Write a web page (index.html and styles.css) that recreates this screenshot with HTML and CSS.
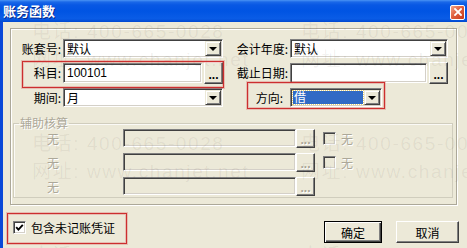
FILE: index.html
```html
<!DOCTYPE html>
<html lang="zh-CN">
<head>
<meta charset="utf-8">
<title>账务函数</title>
<link rel="stylesheet" href="styles.css">
</head>
<body>
<div class="win">
  <div class="titlebar">
    <span class="title">账务函数</span>
    <span class="close"><svg width="8" height="8" viewBox="0 0 8 8"><path d="M1 1L7 7M7 1L1 7" stroke="#fff" stroke-width="1.8" stroke-linecap="square"/></svg></span>
  </div>
  <div class="client">
    <div class="panel">
      <div class="form">
        <span class="lbl">账套号:</span>
        <div class="combo"><span class="val">默认</span><span class="drop"><i class="tri"></i></span></div>
        <span class="lbl">会计年度:</span>
        <div class="combo"><span class="val">默认</span><span class="drop"><i class="tri"></i></span></div>

        <span class="lbl">科目:</span>
        <div class="pick"><div class="edit">100101</div><span class="dots">...</span></div>
        <span class="lbl">截止日期:</span>
        <div class="pick"><div class="edit"></div><span class="dots">...</span></div>

        <span class="lbl">期间:</span>
        <div class="combo"><span class="val">月</span><span class="drop"><i class="tri"></i></span></div>
        <span class="lbl lbl-dir">方向:</span>
        <div class="combo combo-dir"><span class="val sel">借</span><span class="drop"><i class="tri"></i></span></div>
      </div>
      <fieldset class="group">
        <legend>辅助核算</legend>
        <div class="arow">
          <span class="albl">无</span><span class="aedit"></span><span class="dots dis">...</span>
          <span class="acb"></span><span class="atxt">无</span>
        </div>
        <div class="arow">
          <span class="albl">无</span><span class="aedit"></span><span class="dots dis">...</span>
          <span class="acb"></span><span class="atxt">无</span>
        </div>
        <div class="arow">
          <span class="albl">无</span><span class="aedit"></span><span class="dots dis">...</span>
        </div>
      </fieldset>
    </div>
    <div class="footer">
      <div class="chk">
        <span class="box"><svg width="9" height="9" viewBox="0 0 9 9"><path d="M1.2 4.2L3.4 6.6L7.8 1.8" fill="none" stroke="#000" stroke-width="1.9"/></svg></span>
        <span>包含未记账凭证</span>
      </div>
      <div class="btns">
        <span class="btn def">确定</span>
        <span class="btn">取消</span>
      </div>
    </div>
    <div class="watermark">
      <div class="wm-tile"><span>电话: 400-665-0028</span><span>网址: www.chanjet.net</span></div>
      <div class="wm-tile"><span>电话: 400-665-0028</span><span>网址: www.chanjet.net</span></div>
      <div class="wm-tile"><span>电话: 400-665-0028</span><span>网址: www.chanjet.net</span></div>
      <div class="wm-tile"><span>电话: 400-665-0028</span><span>网址: www.chanjet.net</span></div>
      <div class="wm-tile"><span>电话: 400-665-0028</span></div>
      <div class="wm-tile"><span>电话: 400-665-0028</span></div>
    </div>
  </div>
  <div class="mark mark-subject"></div>
  <div class="mark mark-dir"></div>
  <div class="mark mark-chk"></div>
</div>
</body>
</html>
```

FILE: styles.css
```css
* { box-sizing: border-box; }
html, body { margin: 0; padding: 0; }
body {
  width: 467px; height: 248px; overflow: hidden;
  background: #ece9d8;
  font-family: "Noto Sans CJK SC", "Liberation Sans", sans-serif;
  font-size: 12px; color: #000;
}
.win { position: relative; width: 467px; height: 248px; display: flex; flex-direction: column; }

.titlebar {
  height: 22px; flex: none;
  display: flex; align-items: center; justify-content: space-between;
  padding: 0 2px 0 3px;
  background: linear-gradient(#4a94f5 0, #1a68e8 2px, #0858e4 5px, #0054e3 50%, #0a5ce6 85%, #0048d0 100%);
}
.title {
  color: #fff; font-weight: bold; font-size: 13px; line-height: 16px;
  text-shadow: 1px 1px #0b2a8a;
}
.close {
  width: 15px; height: 15px; margin-top: 2px;
  border: 1px solid #fff; border-radius: 2px;
  background: linear-gradient(135deg, #f3a58a 0%, #e0603e 45%, #c8381a 100%);
  display: flex; align-items: center; justify-content: center;
}

.client {
  position: relative; overflow: hidden;
  flex: 1; display: flex; flex-direction: column;
  border-left: 3px solid #0a48d8;
  padding: 6px 0 0 7px;
}

.panel {
  width: 447px; height: 177px; flex: none;
  border: 1px solid #aca899;
  box-shadow: inset 1px 1px #fff, 1px 1px #fff;
  display: flex; flex-direction: column;
}

.form {
  display: grid;
  grid-template-columns: 52px 160px 67px 158px;
  grid-template-rows: 21px 22px 21px;
  row-gap: 3px;
  padding-top: 9px;
}
.lbl { align-self: center; text-align: right; padding-right: 2px; line-height: 14px; white-space: nowrap; }
.lbl-dir { padding-right: 7px; }

.combo {
  align-self: center; height: 19px; display: flex; padding: 1px;
  background: #fff;
  border: 1px solid; border-color: #808080 #fff #fff #808080;
  box-shadow: inset 1px 1px #404040, inset -1px -1px #d4d0c8;
}
.combo .val { flex: 1; line-height: 15px; padding-left: 2px; }
.combo-dir { width: 92px; justify-self: start; }
.combo .sel {
  margin: 1px; line-height: 11px; padding-left: 1px;
  background: #316ac5; color: #fff;
  outline: 1px dotted #e8d070; outline-offset: 0;
}
.drop {
  width: 16px; height: 15px; flex: none;
  display: flex; align-items: center; justify-content: center;
  background: #ece9d8;
  border: 1px solid; border-color: #ece9d8 #404040 #404040 #ece9d8;
  box-shadow: inset 1px 1px #fff, inset -1px -1px #808080;
}
.tri { display: block; width: 0; height: 0; border-left: 4px solid transparent; border-right: 4px solid transparent; border-top: 4px solid #000; }

.pick { display: flex; align-items: center; gap: 2px; }
.edit {
  flex: 1; height: 20px; background: #fff;
  border: 1px solid; border-color: #808080 #fff #fff #808080;
  box-shadow: inset 1px 1px #404040, inset -1px -1px #d4d0c8;
  font-family: "Liberation Sans", sans-serif; font-size: 12px;
  line-height: 18px; padding-left: 3px;
}
.dots {
  width: 19px; height: 22px; flex: none;
  display: flex; align-items: flex-end; justify-content: center;
  padding-bottom: 4px;
  font-family: "Liberation Sans", sans-serif; font-weight: bold; font-size: 12px; line-height: 8px;
  background: #ece9d8;
  border: 1px solid; border-color: #fff #404040 #404040 #fff;
  box-shadow: inset -1px -1px #808080;
}

.group {
  margin: 9px 3px 0 2px; padding: 0 0 2px 0;
  border: 1px solid #d0cdbd; min-width: 0;
  box-shadow: inset 1px 1px #fbfaf6;
}
.group legend {
  margin-left: 5px; padding: 0 1px; line-height: 12px;
  color: #aca899; text-shadow: 1px 1px #fff;
}
.arow { display: flex; align-items: center; height: 18px; margin-bottom: 6px; }
.arow:last-child { margin-bottom: 0; }
.albl { width: 109px; padding-left: 33px; color: #aca899; text-shadow: 1px 1px #fff; }
.aedit {
  width: 173px; height: 18px;
  border: 1px solid; border-color: #808080 #fff #fff #808080;
  box-shadow: inset 1px 1px #404040, inset -1px -1px #d4d0c8;
}
.dots.dis { height: 19px; color: #aca899; padding-bottom: 3px; text-shadow: 1px 1px #fff; }
.acb {
  width: 13px; height: 13px; margin-left: 8px;
  border: 1px solid; border-color: #808080 #fff #fff #808080;
  box-shadow: inset 1px 1px #404040, inset -1px -1px #d4d0c8;
}
.atxt { margin-left: 5px; color: #aca899; text-shadow: 1px 1px #fff; }

.footer {
  flex: 1; display: flex; justify-content: space-between; align-items: flex-start;
  padding: 16px 8px 0 3px;
}
.chk { display: flex; align-items: center; gap: 5px; line-height: 13px; }
.box {
  width: 13px; height: 13px; background: #fff;
  display: flex; align-items: center; justify-content: center;
  border: 1px solid; border-color: #808080 #fff #fff #808080;
  box-shadow: inset 1px 1px #404040, inset -1px -1px #d4d0c8;
}
.btns { display: flex; gap: 14px; }
.btn {
  height: 22px; display: flex; align-items: center; justify-content: center;
  width: 63px; background: #ece9d8;
  border: 1px solid; border-color: #fff #404040 #404040 #fff;
  box-shadow: inset -1px -1px #808080;
}
.btn.def {
  width: 58px; border: 1px solid #000;
  box-shadow: inset 1px 1px #fff, inset -1px -1px #404040, inset -2px -2px #808080;
}

.watermark {
  position: absolute; inset: 0; pointer-events: none;
  display: grid; grid-template-columns: 269px 269px; grid-auto-rows: 112px;
  padding: 0 0 0 29px;
  margin-top: -4px;
}
.wm-tile { display: flex; flex-direction: column; }
.wm-tile span {
  font-family: "Liberation Sans", "Noto Sans CJK SC", sans-serif;
  font-size: 19px; line-height: 28px; letter-spacing: 1.6px;
  color: rgba(60, 55, 40, 0.07); white-space: nowrap;
}

.mark {
  position: absolute; pointer-events: none;
  border: 1px solid #cc2f2f;
  box-shadow: 0 0 0 1px rgba(220, 90, 90, 0.3), inset 0 0 0 1px rgba(220, 90, 90, 0.3);
}
.mark-subject { left: 22px; top: 61px; width: 202px; height: 27px; }
.mark-dir { left: 247px; top: 82px; width: 138px; height: 27px; }
.mark-chk { left: 7px; top: 213px; width: 120px; height: 31px; }
```
